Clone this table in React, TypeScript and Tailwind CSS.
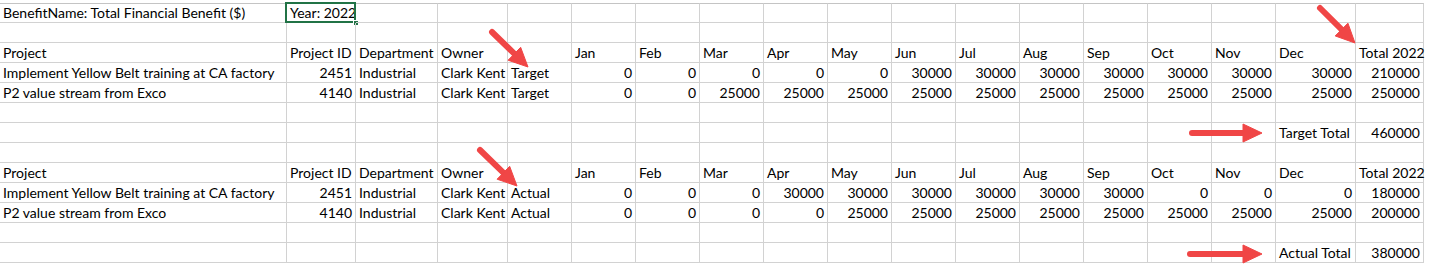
import type { ReactNode } from 'react'

type Cell = string | number | null

const months = ['Jan', 'Feb', 'Mar', 'Apr', 'May', 'Jun', 'Jul', 'Aug', 'Sep', 'Oct', 'Nov', 'Dec']
const header: Cell[] = ['Project', 'Project ID', 'Department', 'Owner', null, ...months, 'Total 2022']
const blank: Cell[] = Array(18).fill(null)

function totalRow(label: string, value: number): Cell[] {
  const row = [...blank]
  row[16] = label
  row[17] = value
  return row
}

const rows: Cell[][] = [
  ['BenefitName: Total Financial Benefit ($)', 'Year: 2022', ...Array(16).fill(null)],
  blank,
  header,
  ['Implement Yellow Belt training at CA factory', 2451, 'Industrial', 'Clark Kent', 'Target', 0, 0, 0, 0, 0, 30000, 30000, 30000, 30000, 30000, 30000, 30000, 210000],
  ['P2 value stream from Exco', 4140, 'Industrial', 'Clark Kent', 'Target', 0, 0, 25000, 25000, 25000, 25000, 25000, 25000, 25000, 25000, 25000, 25000, 250000],
  blank,
  totalRow('Target Total', 460000),
  blank,
  header,
  ['Implement Yellow Belt training at CA factory', 2451, 'Industrial', 'Clark Kent', 'Actual', 0, 0, 0, 30000, 30000, 30000, 30000, 30000, 30000, 0, 0, 0, 180000],
  ['P2 value stream from Exco', 4140, 'Industrial', 'Clark Kent', 'Actual', 0, 0, 0, 0, 25000, 25000, 25000, 25000, 25000, 25000, 25000, 25000, 200000],
  blank,
  totalRow('Actual Total', 380000),
]

function Arrow({ x1, y1, x2, y2 }: { x1: number; y1: number; x2: number; y2: number }) {
  const len = Math.hypot(x2 - x1, y2 - y1)
  const ux = (x2 - x1) / len
  const uy = (y2 - y1) / len
  const head = 19
  const half = 9
  const bx = x2 - ux * head
  const by = y2 - uy * head
  const points = `${x2},${y2} ${bx - uy * half},${by + ux * half} ${bx + uy * half},${by - ux * half}`
  return (
    <g fill="#f04646" stroke="#f04646">
      <line x1={x1} y1={y1} x2={bx + ux * 2} y2={by + uy * 2} strokeWidth={6} strokeLinecap="round" />
      <polygon points={points} strokeWidth={1} strokeLinejoin="round" />
    </g>
  )
}

function GridCell({ value, first, selected }: { value: Cell; first: boolean; selected: boolean }) {
  const numeric = typeof value === 'number'
  let content: ReactNode = value
  return (
    <div
      className={`relative flex h-5 items-end overflow-visible whitespace-nowrap border-r border-b border-[#d2d2d2] px-[3px] pb-[1px] leading-[16px] ${
        first ? 'border-t border-t-[#c4c4c4]' : ''
      } ${numeric ? 'justify-end' : 'justify-start'}`}
    >
      {content}
      {selected ? (
        <>
          <div className="pointer-events-none absolute -top-[2px] -left-[2px] -right-[1px] -bottom-[1px] border-2 border-[#217346]" />
          <div className="absolute -right-[4px] -bottom-[4px] h-[6px] w-[6px] border border-white bg-[#217346]" />
        </>
      ) : null}
    </div>
  )
}

export default function App() {
  return (
    <div className="h-[268px] w-[1438px] overflow-hidden bg-white pt-[3px] text-[14px] text-black" style={{ fontFamily: 'Lato, "Liberation Sans", sans-serif' }}>
      <div className="relative w-[1424px]">
        <div className="grid grid-cols-[287px_69px_82px_70px_64px_64px_64px_64px_64px_64px_64px_64px_64px_64px_64px_64px_80px_68px]">
          {rows.map((row, r) =>
            row.map((value, c) => (
              <GridCell key={`${r}-${c}`} value={value} first={r === 0} selected={r === 0 && c === 1} />
            )),
          )}
        </div>
        <svg className="pointer-events-none absolute top-[-3px] left-0" width="1438" height="268">
          <Arrow x1={492} y1={32} x2={528} y2={67} />
          <Arrow x1={1320} y1={8} x2={1355} y2={43} />
          <Arrow x1={1192} y1={133} x2={1262} y2={133} />
          <Arrow x1={480} y1={150} x2={517} y2={186} />
          <Arrow x1={1190} y1={254} x2={1262} y2={254} />
        </svg>
      </div>
    </div>
  )
}
